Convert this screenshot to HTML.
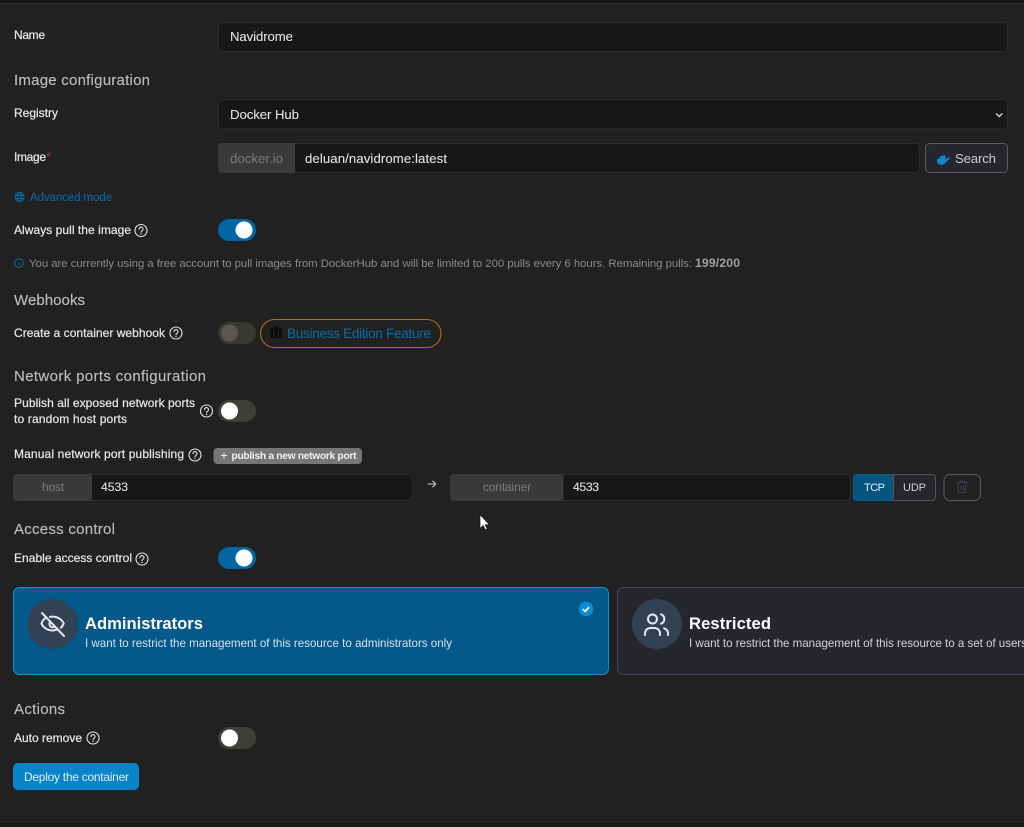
<!DOCTYPE html>
<html lang="en"><head><meta charset="utf-8"><title>Create container</title>
<style>
html,body{margin:0;padding:0;background:#212121;width:1024px;height:827px;overflow:hidden}
svg{display:block;font-family:"Liberation Sans",sans-serif;filter:blur(.35px)}
text{white-space:pre}
.l{font-size:12px;fill:#e4e4e4;stroke:#e4e4e4;stroke-width:.25px}
.h{font-size:15px;fill:#b9bcc0;stroke:#b9bcc0;stroke-width:.15px}
.v{font-size:13.2px;fill:#e2e2e2;stroke:#e2e2e2;stroke-width:.1px}
.a{fill:#7d7d7d}
.help{fill:none;stroke:#e4e4e4;stroke-width:1.1}
</style></head><body>
<svg width="1024" height="827" viewBox="0 0 1024 827" xmlns="http://www.w3.org/2000/svg">
<defs>
<g id="help"><circle class="help" r="6"/><path class="help" d="M-2-1.400a2 2 0 1 1 3.200 1.600c-.8.500-1.200.9-1.200 1.500" stroke-linecap="round"/><circle cy="3.400" r=".7" fill="#e4e4e4"/></g>
<g id="on"><rect width="38" height="22" rx="11" fill="#0067a6"/><circle cx="26" cy="11" r="8.500" fill="#fff"/></g>
<g id="off"><rect width="38" height="22" rx="11" fill="#403e39"/><circle cx="11.500" cy="11" r="8.500" fill="#fff"/></g>
</defs>
<rect width="1024" height="827" fill="#212121"/>
<rect width="1024" height="3" fill="#171717"/>
<rect y="3" width="1024" height="1" fill="#2c2c2c"/>
<rect y="821" width="1024" height="1" fill="#2c2c2c"/>
<rect y="822" width="1024" height="5" fill="#171717"/>

<!-- Name -->
<text class="l" x="14" y="39" textLength="31" lengthAdjust="spacing">Name</text>
<rect x="218.500" y="22.500" width="789" height="29" rx="4" fill="#171717" stroke="#2d2d2d"/>
<text class="v" x="230" y="41" textLength="63" lengthAdjust="spacing">Navidrome</text>

<!-- Image configuration -->
<text class="h" x="14" y="85" textLength="136" lengthAdjust="spacing">Image configuration</text>
<text class="l" x="14" y="117" textLength="44" lengthAdjust="spacing">Registry</text>
<rect x="218.500" y="99.500" width="789" height="29.500" rx="4" fill="#171717" stroke="#2d2d2d"/>
<text class="v" x="230" y="119" textLength="69" lengthAdjust="spacing">Docker Hub</text>
<path d="M996 113.500l3.200 3 3.200-3" fill="none" stroke="#d8d8d8" stroke-width="1.400"/>

<text class="l" x="14" y="161" textLength="32" lengthAdjust="spacing">Image</text>
<text x="46.500" y="161" font-size="12" fill="#b03030">*</text>
<rect x="218.500" y="143.500" width="701" height="29" rx="4" fill="#171717" stroke="#2d2d2d"/>
<path d="M295 143H222a4 4 0 0 0-4 4v22a4 4 0 0 0 4 4h73z" fill="#3a3a3a"/>
<text class="a" font-size="13.200" x="230" y="163" textLength="53" lengthAdjust="spacing">docker.io</text>
<text class="v" x="305" y="163" textLength="142" lengthAdjust="spacing">deluan/navidrome:latest</text>
<rect x="925.500" y="143.500" width="82" height="29" rx="4" fill="#26272c" stroke="#5c5c5c"/>
<path d="M937 159.500c0-.3.200-.5.500-.5h1.500c0-1.500 1-2.500 2.500-3 1.500-.6 3-.6 4-.3v3.300h1.500c.3-1.200 1-1.800 1.700-2 .2.800.6 1.200 1.300 1.300-.5 1.400-1.500 2.100-2.800 2.200-1.100 2.700-3.400 4.300-6.200 4.300-2.800 0-4.500-2-4-5.800z" fill="#0b87d6"/>
<text x="955" y="163" font-size="13.200" fill="#c9ccd1" textLength="41" lengthAdjust="spacing">Search</text>

<!-- Advanced -->
<g fill="none" stroke="#0a6ea8" stroke-width="1"><circle cx="19.500" cy="197" r="4.500"/><ellipse cx="19.500" cy="197" rx="2" ry="4.500"/><path d="M15 195.500h9M15 198.500h9"/></g>
<text x="30" y="201" font-size="11.500" fill="#0a6ea8" textLength="82" lengthAdjust="spacing">Advanced mode</text>

<text class="l" x="14" y="234" textLength="117" lengthAdjust="spacing">Always pull the image</text>
<use href="#help" x="141" y="230.500"/>
<use href="#on" x="218" y="219"/>

<g fill="none" stroke="#0a6ea8" stroke-width="1"><circle cx="19" cy="263" r="4.300"/><path d="M19 262.500v2.500M19 260.500v.8"/></g>
<text x="29" y="267" font-size="11.400" fill="#8c8c8c" textLength="663" lengthAdjust="spacing">You are currently using a free account to pull images from DockerHub and will be limited to 200 pulls every 6 hours. Remaining pulls:</text>
<text x="695" y="267" font-size="12.200" font-weight="bold" fill="#a0a0a0" textLength="45" lengthAdjust="spacing">199/200</text>

<!-- Webhooks -->
<text class="h" x="14" y="305" textLength="71" lengthAdjust="spacing">Webhooks</text>
<text class="l" x="14" y="337" textLength="151" lengthAdjust="spacing">Create a container webhook</text>
<use href="#help" x="176" y="333"/>
<rect x="218" y="322" width="38" height="22" rx="11" fill="#3a3833"/>
<circle cx="229.500" cy="333" r="8.500" fill="#5b5852"/>
<rect x="260.500" y="319.500" width="180.500" height="28" rx="14" fill="none" stroke="#b2700f" stroke-width="1.100"/>
<g fill="#0b0b0b" stroke="#0b0b0b" stroke-width="1.200"><rect x="271" y="329" width="10.500" height="8.500" rx="1"/><path fill="none" d="M274.500 329v-1.500h3.500v1.500"/></g>
<path d="M274 329.500v7.500M278.500 329.500v7.500" stroke="#333" stroke-width=".8"/>
<text x="287" y="338" font-size="13.500" fill="#0a6ea8" textLength="144" lengthAdjust="spacing">Business Edition Feature</text>

<!-- Network -->
<text class="h" x="14" y="381" textLength="192" lengthAdjust="spacing">Network ports configuration</text>
<text class="l" x="14" y="407" textLength="181" lengthAdjust="spacing">Publish all exposed network ports</text>
<text class="l" x="14" y="423" textLength="113" lengthAdjust="spacing">to random host ports</text>
<use href="#help" x="206.500" y="411"/>
<use href="#off" x="218" y="400"/>

<text class="l" x="14" y="458" textLength="170" lengthAdjust="spacing">Manual network port publishing</text>
<use href="#help" x="195" y="455"/>
<rect x="213.500" y="448" width="148.500" height="16" rx="4" fill="#767676"/>
<path d="M224 452.500v6M221 455.500h6" stroke="#e8e8e8" stroke-width="1"/>
<text x="231.500" y="459" font-size="10.200" font-weight="bold" fill="#f2f2f2" textLength="125" lengthAdjust="spacing">publish a new network port</text>

<rect x="13.500" y="474.500" width="399" height="26" rx="4" fill="#171717" stroke="#2d2d2d"/>
<path d="M92 474H17a4 4 0 0 0-4 4v19a4 4 0 0 0 4 4h75z" fill="#3a3a3a"/>
<text class="a" font-size="11.800" x="42" y="491" textLength="22" lengthAdjust="spacing">host</text>
<text class="v" style="font-size:12.200px" x="101" y="491" textLength="27" lengthAdjust="spacing">4533</text>
<path d="M427.500 484h8M432.500 480.800l3.200 3.200-3.200 3.200" fill="none" stroke="#c8c8c8" stroke-width="1.100"/>

<rect x="450.500" y="474.500" width="400" height="26" rx="4" fill="#171717" stroke="#2d2d2d"/>
<path d="M563.500 474H454a4 4 0 0 0-4 4v19a4 4 0 0 0 4 4h109.500z" fill="#3a3a3a"/>
<text class="a" font-size="11.800" x="483" y="491" textLength="48" lengthAdjust="spacing">container</text>
<text class="v" style="font-size:12.200px" x="573" y="491" textLength="26" lengthAdjust="spacing">4533</text>

<path d="M893.500 474.500H857a3.500 3.500 0 0 0-3.500 3.500v19a3.500 3.500 0 0 0 3.500 3.500h36.500z" fill="#03557f" stroke="#03608f"/>
<path d="M893.500 474.500H932a3.500 3.500 0 0 1 3.500 3.500v19a3.500 3.500 0 0 1-3.500 3.500h-38.500z" fill="#26272c" stroke="#555"/>
<text x="864" y="491" font-size="11.200" fill="#e6edf2" textLength="21" lengthAdjust="spacing">TCP</text>
<text x="903" y="491" font-size="11" fill="#d0d2d6" textLength="23" lengthAdjust="spacing">UDP</text>
<rect x="944" y="474.500" width="36.500" height="26" rx="6" fill="none" stroke="#565656" stroke-width="1.200"/>
<g fill="none" stroke="#3b4352" stroke-width="1.100"><path d="M957 482.500h10.500M960 482.500v-1.500h4.500v1.500M958 482.500l.6 10h6.800l.6-10M961 485.500v4.500M963.500 485.500v4.500"/></g>

<!-- Access -->
<text class="h" x="14" y="534" textLength="101" lengthAdjust="spacing">Access control</text>
<text class="l" x="14" y="562" textLength="118" lengthAdjust="spacing">Enable access control</text>
<use href="#help" x="142" y="559"/>
<use href="#on" x="218" y="547"/>

<rect x="13.500" y="587.500" width="595" height="87" rx="6" fill="#04598a" stroke="#0d92d6"/>
<circle cx="52.500" cy="624" r="25" fill="#334155"/>
<g fill="none" stroke="#e3e8ee" stroke-width="2" stroke-linecap="round"><path d="M42 613l22 23"/><path d="M45.500 618c-2 1.500-3.500 3.600-4 5.500 1.500 3.800 6 7 11 7 1.700 0 3-.3 4.300-.8M50 616.900c.8-.2 1.600-.3 2.500-.3 5.200 0 9.700 3 11.200 6.900-.5 1.500-1.500 3-2.800 4.300"/><path d="M50 622a3.400 3.400 0 0 0 4.600 4.800"/></g>
<text x="85" y="629" font-size="16.600" font-weight="bold" fill="#fff" textLength="118" lengthAdjust="spacing">Administrators</text>
<text x="85" y="647" font-size="11.600" fill="#d4e2ec" textLength="367" lengthAdjust="spacing">I want to restrict the management of this resource to administrators only</text>
<circle cx="586" cy="609" r="7.300" fill="#0d8cd5"/>
<path d="M582.800 609.200l2.300 2.200 4-4.200" fill="none" stroke="#fff" stroke-width="1.600"/>

<rect x="617.500" y="587.500" width="420" height="87" rx="6" fill="#26272c" stroke="#3f4654"/>
<circle cx="657" cy="624" r="25" fill="#334155"/>
<g fill="none" stroke="#e6eaf0" stroke-width="2" stroke-linecap="round"><circle cx="652.500" cy="619" r="4.500"/><path d="M645 635v-1.500c0-3.200 2.400-5.500 5.500-5.500h4c3.100 0 5.500 2.300 5.500 5.500v1.500"/><path d="M661 614.300c2.300.8 3.300 2.600 3.300 4.700s-1 3.900-3.300 4.700M664 628.300c2.300.7 4 2.500 4 5.200v1.500"/></g>
<text x="689" y="629" font-size="16.600" font-weight="bold" fill="#fff" textLength="82" lengthAdjust="spacing">Restricted</text>
<text x="689" y="647" font-size="11.600" fill="#d2d4d8" textLength="338" lengthAdjust="spacing">I want to restrict the management of this resource to a set of users</text>

<!-- Actions -->
<text class="h" x="14" y="714" textLength="51" lengthAdjust="spacing">Actions</text>
<text class="l" x="14" y="742" textLength="68" lengthAdjust="spacing">Auto remove</text>
<use href="#help" x="93" y="738"/>
<use href="#off" x="218" y="727"/>
<rect x="13" y="763" width="126" height="27" rx="5" fill="#0a84c8"/>
<text x="24" y="781" font-size="12" fill="#dbeefa" textLength="105" lengthAdjust="spacing">Deploy the container</text>

<!-- Cursor -->
<path d="M480 514.500v14l3.200-3 2.200 4.500 1.900-.9-2.100-4.400h4.200z" fill="#fff" stroke="#111" stroke-width=".7"/>
</svg>
</body></html>
